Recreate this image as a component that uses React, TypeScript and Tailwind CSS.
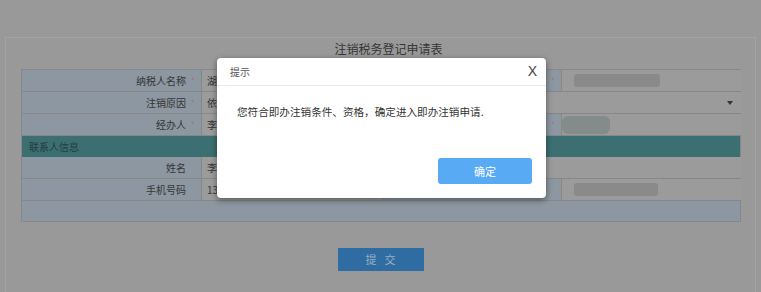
const font = { fontFamily: '"Noto Sans CJK SC", "Noto Sans", sans-serif' };

const Label = ({ text, req }: { text: string; req?: boolean }) => (
  <div className="flex h-full items-center justify-end bg-[#8c97a1] pr-[6px] text-[10px] text-[#353535] border-r border-[#878787]">
    <span>{text}</span>
    <span className={`ml-[5px] w-[4px] text-[8px] ${req ? "text-[#b0687a]" : "text-transparent"}`}>*</span>
  </div>
);

const Value = ({ text }: { text?: string }) => (
  <div className="flex h-full items-center bg-[#9b9b9b] pl-[5px] text-[10px] text-[#353535]">{text}</div>
);

const Blur = ({ w, h }: { w: string; h: string }) => (
  <div className="flex h-full items-center bg-[#9b9b9b] pl-[12px]">
    <div className={`${w} ${h} rounded-[3px] bg-[#8a8a8a]`} />
  </div>
);

const App = () => {
  return (
    <div className="relative h-[292px] w-[761px] overflow-hidden bg-[#999999]" style={font}>
      <div className="pt-[37px] px-[5px]">
        <div className="h-[260px] border border-[#a3a3a3] px-[15px]">
          <div className="pt-[2px] pl-[16px] text-center text-[12px] text-[#363636] leading-[17px]">注销税务登记申请表</div>
          <div className="mt-[12px] w-[720px] border border-[#888888] bg-[#8c97a1]">
            <div className="grid grid-cols-[180px_180px_180px_180px] h-[22px] border-b border-[#878787]">
              <Label text="纳税人名称" req />
              <Value text="湖北某某贸易有限公司" />
              <Label text="纳税人识别号" req />
              <Blur w="w-[86px]" h="h-[13px]" />
            </div>
            <div className="grid grid-cols-[180px_540px] h-[22px] border-b border-[#878787]">
              <Label text="注销原因" req />
              <div className="flex h-full items-center justify-between bg-[#9b9b9b] pl-[5px] pr-[9px] text-[10px] text-[#353535]">
                <span>依法终止纳税义务</span>
                <svg width="6" height="4" viewBox="0 0 6 4"><path d="M0 0h6L3 4z" fill="#333" /></svg>
              </div>
            </div>
            <div className="grid grid-cols-[180px_180px_180px_180px] h-[22px] border-b border-[#878787]">
              <Label text="经办人" req />
              <Value text="李某某" />
              <Label text="经办人身份证" req />
              <div className="flex h-full items-center bg-[#9b9b9b]">
                <div className="h-[18px] w-[48px] rounded-[6px] bg-[#848b8b]" />
              </div>
            </div>
            <div className="flex h-[21px] items-center bg-[#3b6f71] pl-[7px] text-[10px] text-[#263c3e]">联系人信息</div>
            <div className="grid grid-cols-[180px_540px] h-[22px] border-b border-[#878787]">
              <Label text="姓名" />
              <Value text="李某某" />
            </div>
            <div className="grid grid-cols-[180px_180px_180px_180px] h-[22px] border-b border-[#878787]">
              <Label text="手机号码" />
              <Value text="13800000000" />
              <Label text="固定电话号码" />
              <Blur w="w-[84px]" h="h-[13px]" />
            </div>
            <div className="h-[20px] bg-[#8c97a1]" />
          </div>
          <div className="mt-[26px] flex justify-center">
            <div className="flex h-[23px] w-[86px] items-center justify-center bg-[#2e6ca2] pl-[8px] text-[11px] tracking-[8px] text-[#9aafc2]">
              提交
            </div>
          </div>
        </div>
      </div>

      {/* modal dialog */}
      <div className="absolute left-[217px] top-[58px] flex h-[140px] w-[329px] flex-col rounded-[4px] bg-white shadow-[0_2px_6px_rgba(0,0,0,0.45)]">
        <div className="flex h-[28px] items-center justify-between border-b border-[#e8e8e8] pl-[13px] pr-[9px]">
          <span className="text-[10px] text-[#555]">提示</span>
          <span className="text-[14px] text-[#444]" style={{ fontFamily: '"Liberation Sans", sans-serif' }}>X</span>
        </div>
        <div className="pl-[20px] pt-[18px] text-[10.6px] text-[#333]">您符合即办注销条件、资格，确定进入即办注销申请.</div>
        <div className="mt-auto flex justify-end pb-[14px] pr-[14px]">
          <div className="flex h-[26px] w-[94px] items-center justify-center rounded-[3px] bg-[#57aaf3] text-[11px] text-white">确定</div>
        </div>
      </div>
    </div>
  );
};

export default App;
